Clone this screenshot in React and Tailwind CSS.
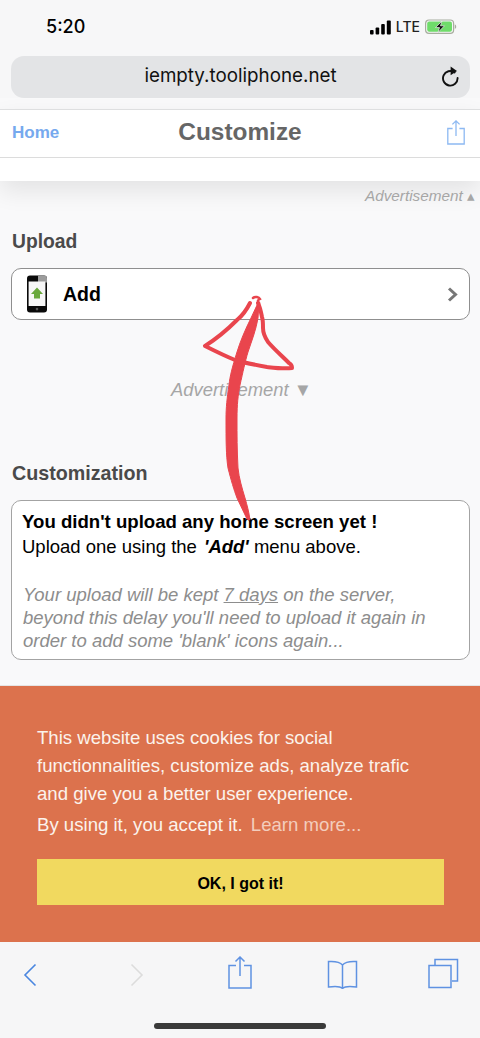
import React from 'react';

const sans = { fontFamily: '"Liberation Sans", Arial, sans-serif' };

const StatusBar = () => (
  <div className="flex h-[56px] items-start justify-between pl-[46px] pr-[23px] pt-[16px]">
    <span className="font-['Inter',sans-serif] text-[18px] leading-[22px] font-medium text-black">5:20</span>
    <div className="flex items-center gap-[5px] pt-[3px]">
      <svg width="21" height="15" viewBox="0 0 21 15" fill="#000">
        <rect x="0" y="10" width="3.6" height="4.6" rx="1" />
        <rect x="5.6" y="7.5" width="3.6" height="7.1" rx="1" />
        <rect x="11.2" y="4" width="3.6" height="10.6" rx="1" />
        <rect x="16.8" y="0.5" width="4" height="14.1" rx="1" />
      </svg>
      <span className="font-['Inter',sans-serif] text-[14px] leading-[16px] font-medium text-[#222]">LTE</span>
      <svg width="32" height="16" viewBox="0 0 32 16">
        <rect x="0.6" y="1" width="28" height="13.4" rx="3.4" fill="none" stroke="#a8ad9f" strokeWidth="1.2" />
        <rect x="2.2" y="2.6" width="24.800" height="10.2" rx="2" fill="#6fdc6a" />
        <path d="M29.800 5.500c1 .3 1.400 1.200 1.400 2.200s-.4 1.900-1.400 2.200z" fill="#a8ad9f" />
        <path d="M17 2 L10.500 8.600 H14.500 L13 13.400 L19.500 6.800 H15.500 Z" fill="#111" stroke="#f4f4f4" strokeWidth="0.7" />
      </svg>
    </div>
  </div>
);

const UrlBar = () => (
  <div className="pl-[11px] pr-[10px]">
    <div className="relative flex h-[42px] items-center justify-center rounded-[13px] bg-[#e3e4e6]">
      <span className="mt-[-2px] font-['Inter',sans-serif] text-[18.8px] text-[#111]">iempty.tooliphone.net</span>
      <svg className="absolute right-[10px] top-[9px]" width="20" height="22" viewBox="0 0 20 22" fill="none">
        <path d="M14.6 7.4A7.3 7.3 0 1 0 17.6 13" stroke="#111" strokeWidth="1.9" strokeLinecap="round" />
        <path d="M10.6 1.6 L17 6 L10.6 10.2 Z" fill="#111" />
      </svg>
    </div>
  </div>
);

const NavHeader = () => (
  <div className="mt-[11px] bg-white shadow-[0_10px_24px_rgba(0,0,0,0.09)]">
    <div className="flex h-[49px] items-center justify-between border-y-[1px] border-t-[#dedfe0] border-b-[#dcdcdc] pb-[2px] pl-[12px] pr-[15px]">
      <span className="w-[80px] text-[17px] font-bold text-[#76a9ee]">Home</span>
      <span className="ml-[3px] text-[24.4px] font-bold text-[#666]">Customize</span>
      <div className="flex w-[80px] justify-end">
        <svg width="18" height="25" viewBox="0 0 18 25" fill="none" stroke="#8db9f2" strokeWidth="1.3">
          <path d="M5.6 8.5H0.8V24H17.2V8.5H12.4" />
          <path d="M9 16V1M5.4 4.4 9 .9l3.6 3.5" />
        </svg>
      </div>
    </div>
    <div className="h-[23px]" />
  </div>
);

const AdLabel = ({ className, arrow }) => (
  <div className={`italic text-[#a6a6a6] ${className}`}>
    Advertisement <span className="not-italic">{arrow}</span>
  </div>
);

const Content = () => (
  <div className="pl-[11px] pr-[10px]">
    <AdLabel className="mt-[6px] text-right text-[15.3px] leading-[18px] mr-[-5px]" arrow="▴" />
    <h2 className="ml-[1px] mt-[26px] text-[19.3px] leading-[22px] font-bold text-[#4a4a4a]">Upload</h2>
    <div className="mt-[15px] flex h-[52px] items-center rounded-[10px] border border-[#8f8f8f] bg-white pl-[15px] pr-[11px]">
      <svg width="20" height="38" viewBox="0 0 20 37" className="shrink-0">
        <rect x="0" y="0" width="20" height="37" rx="3" fill="#0a0a0a" />
        <path d="M11 0H17a3 3 0 0 1 3 3v4H11z" fill="#9c9c9c" />
        <rect x="1.6" y="6" width="16.8" height="24.5" fill="#f7f7f7" />
        <path d="M10 12 16 18.5H13V23H7V18.5H4Z" fill="#69a83c" />
        <circle cx="10" cy="33.6" r="1.3" fill="#555" />
      </svg>
      <span className="ml-[16px] mt-[2px] text-[19.5px] font-bold text-black">Add</span>
      <svg className="ml-auto" width="11" height="15" viewBox="0 0 11 15" fill="none">
        <path d="M2 1.5 8.500 7.500 2 13.500" stroke="#777" strokeWidth="3" />
      </svg>
    </div>
    <AdLabel className="ml-[2px] mt-[59px] text-center text-[18.4px] leading-[22px]" arrow="▼" />
    <h2 className="ml-[1px] mt-[60px] text-[19.7px] leading-[24px] font-bold text-[#4a4a4a]">Customization</h2>
    <div className="mt-[15px] h-[160px] rounded-[10px] border border-[#a3a3a3] bg-white px-[10px] pt-[8px] text-[18.5px] text-black">
      <p className="text-[18.6px] font-bold leading-[25px]">You didn't upload any home screen yet !</p>
      <p className="leading-[25px]">
        Upload one using the <b className="ml-[2px] italic">'Add'</b> menu above.
      </p>
      <p className="ml-[1px] mt-[24px] leading-[23px] italic text-[#8d8d8d]">
        Your upload will be kept <u>7 days</u> on the server, beyond this delay you'll need to upload it again in order to add some 'blank' icons again...
      </p>
    </div>
  </div>
);

const CookieBanner = () => (
  <div className="mt-[25px] h-[257px] border-t border-[#e5e5e5] bg-[#dc724d] px-[37px] pt-[38px] text-[18.6px] text-[#fbf3ec]">
    <p className="leading-[28px]">This website uses cookies for social functionnalities, customize ads, analyze trafic and give you a better user experience.</p>
    <p className="mt-[3px] leading-[28px]">
      By using it, you accept it. <span className="ml-[3px] text-[#f3cdbd]">Learn more...</span>
    </p>
    <button className="mt-[20px] h-[46px] w-[407px] bg-[#f1d95f] pt-[3px] text-[16px] font-bold text-black">OK, I got it!</button>
  </div>
);

const BottomBar = () => (
  <div className="flex h-[96px] flex-col bg-[#f6f6f7]">
    <div className="flex h-[70px] items-start pl-[23px] pt-[14px]">
      <svg className="mt-[7px]" width="14" height="24" viewBox="0 0 14 24" fill="none" stroke="#4a86e0" strokeWidth="1.6">
        <path d="M12.5 1.5 2 12l10.500 10.500" />
      </svg>
      <svg className="ml-[93px] mt-[7px]" width="14" height="24" viewBox="0 0 14 24" fill="none" stroke="#dcdcdc" strokeWidth="1.6">
        <path d="M1.500 1.500 12 12 1.500 22.500" />
      </svg>
      <svg className="ml-[84px]" width="24" height="33" viewBox="0 0 24 33" fill="none" stroke="#5f92e2" strokeWidth="1.500">
        <path d="M8 9.500H1V32H23V9.500H16" />
        <path d="M12 20V1M7.500 5.500 12 1l4.500 4.500" />
      </svg>
      <svg className="ml-[75px] mt-[4px]" width="31" height="29" viewBox="0 0 31 29" fill="none" stroke="#5f92e2" strokeWidth="1.500">
        <path d="M15.500 5C13 2 9 1 1.500 1.500V27C8 26 13 26 15.500 28.500 18 26 23 26 29.500 27V1.500C22 1 18 2 15.500 5ZM15.500 5V28" />
      </svg>
      <svg className="ml-[70px] mt-[2px]" width="31" height="31" viewBox="0 0 31 31" fill="none" stroke="#5f92e2" strokeWidth="1.500">
        <rect x="1" y="7.500" width="22" height="22" />
        <path d="M7 7V1.500H29.500V23H24" />
      </svg>
    </div>
    <div className="mt-[11px] flex justify-center">
      <div className="h-[6px] w-[172px] rounded-full bg-[#3a3a3a]" />
    </div>
  </div>
);

// hand drawn arrow sits over the page
const ScribbleArrow = () => (
  <svg className="pointer-events-none absolute left-0 top-0" width="480" height="1038" viewBox="0 0 480 1038" fill="none">
    <path d="M258 303L251 318C245 330 240 342 237 352C232 368 230 376 229 385C227 398 226 408 226 418C226 440 226 455 228 468C231 480 234 490 237 498L247 519L250 520C249 512 247 505 245 498C242 488 239 478 238 468C237 450 237 435 237 418C237 405 238 395 240 385C243 372 245 362 248 352C252 340 256 330 258 318L259 303Z" fill="#e9454d" stroke="#e9454d" strokeWidth="1" />
    <path d="M250 303C246 311 242 316 237 320C228 329 216 339 205 346C215 351 225 356 235 360C245 363 256 365 267 367C276 368 284 369 292 368C292 366 291 364 289 363C282 356 274 349 268 342C264 336 263 332 263 328C263 324 263 320 262 317C261 312 260 307 258 303" stroke="#e9454d" strokeWidth="4" strokeLinecap="round" strokeLinejoin="round" />
    <path d="M253 298C255 296 259 297 260 299C258 300 257 301 259 303" stroke="#e9454d" strokeWidth="2.500" strokeLinecap="round" />
  </svg>
);

export default function App() {
  return (
    <div className="relative h-[1038px] w-[480px] overflow-hidden bg-[#f9f9fa]" style={sans}>
      <div className="bg-[#f7f7f8] pb-0">
        <StatusBar />
        <UrlBar />
      </div>
      <NavHeader />
      <Content />
      <CookieBanner />
      <BottomBar />
      <ScribbleArrow />
    </div>
  );
}
